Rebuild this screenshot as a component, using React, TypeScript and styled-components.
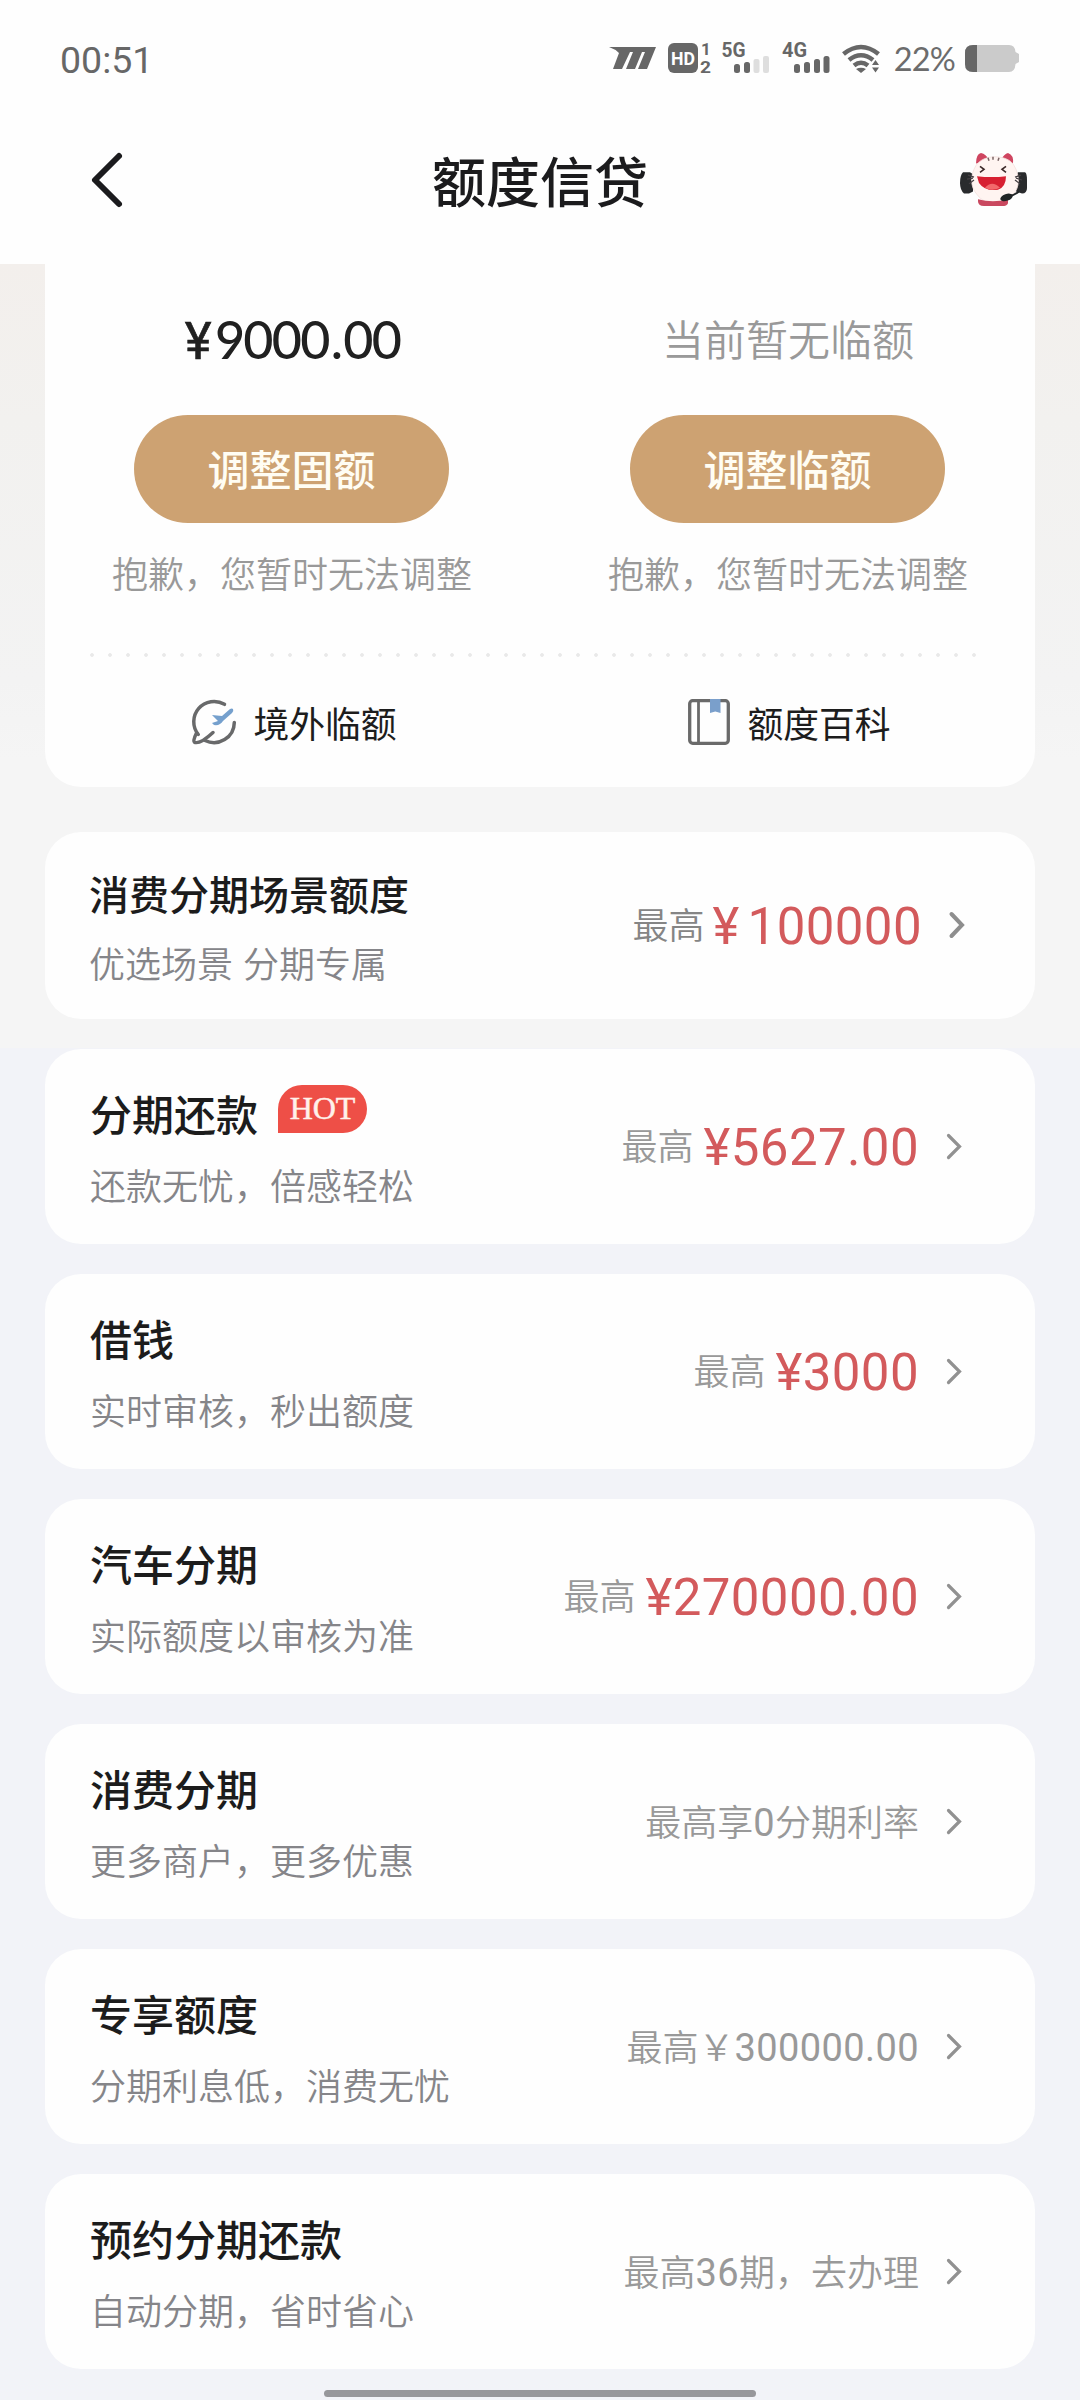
import React from 'react';
import styled, { createGlobalStyle, css } from 'styled-components';

const cjk = `'Noto Sans CJK SC', sans-serif`;
const digits = `Roboto, 'Noto Sans CJK SC', sans-serif`;

const GlobalStyle = createGlobalStyle`
  * { box-sizing: border-box; }
  body { margin: 0; background: #f2f3f8; font-family: ${cjk}; }
  svg { display: block; flex: none; overflow: visible; }
`;

const Screen = styled.div`
  width: 1080px;
  height: 2400px;
  overflow: hidden;
  display: flex;
  flex-direction: column;
  background: linear-gradient(#f3efec 264px, #f2f1ef 420px, #f3f3f3 680px, #f5f5f5 760px, #f5f5f5 1048px, #f2f3f8 1048px);
`;

const Header = styled.header`
  flex: none;
  height: 264px;
  background: #fefefe;
`;

const StatusBar = styled.div`
  height: 118px;
  padding: 0 61px 0 60px;
  display: flex;
  align-items: center;
  justify-content: space-between;
`;

const Clock = styled.div`
  font: 400 37.5px/44px ${digits};
  color: #676767;
  padding-top: 2px;
`;

const StatusIcons = styled.div`
  display: flex;
  align-items: center;
`;

const Battery = styled.div`
  font: 400 32.5px/44px Lato, sans-serif;
  letter-spacing: -0.8px;
  color: #6c6c6c;
  margin: 0 10px 0 14px;
`;

const NavBar = styled.div`
  height: 128px;
  padding: 0 50px 4px 80px;
  display: grid;
  grid-template-columns: 100px 1fr 130px;
  align-items: center;
`;

const PageTitle = styled.h1`
  margin: 0;
  font: 500 54px/64px ${cjk};
  color: #1b1b1d;
  text-align: center;
`;

const Mascot = styled.div`
  display: flex;
  justify-content: flex-end;
`;

const Content = styled.main`
  flex: none;
  padding: 0 45px;
  display: flex;
  flex-direction: column;
`;

const Panel = styled.section`
  height: 523px;
  margin-bottom: 45px;
  padding: 0 45px;
  background: #fefefe;
  border-radius: 0 0 36px 36px;
`;

const Columns = styled.div`
  display: grid;
  grid-template-columns: 1fr 1fr;
  margin: 0 -45px;
`;

const Quota = styled.div`
  height: 389px;
  padding-top: 43px;
  display: flex;
  flex-direction: column;
  align-items: center;

  &:first-child {
    padding-right: 2px;
  }
`;

const Balance = styled.div<{ $empty?: boolean }>`
  height: 66px;
  ${(p) => p.$empty
    ? css`font: 350 42px/62px ${cjk}; color: #999; padding-left: 1px;`
    : css`font: 500 52px/64px Lato, sans-serif; color: #202020; letter-spacing: -1.7px; padding-left: 2px;`}
`;

const YenMark = styled.span`
  font: 400 51px/64px ${digits};
  -webkit-text-stroke: 0.6px #202020;
  margin-right: 5px;
`;

const Point = styled.span`
  margin: 0 2px;
`;

const PillButton = styled.button`
  width: 315px;
  height: 108px;
  margin-top: 42px;
  padding: 0 0 2px;
  border: 0;
  border-radius: 54px;
  background: #cda272;
  color: #fffdf3;
  font: 500 42px/106px ${cjk};
`;

const Notice = styled.div`
  margin-top: 24px;
  padding-left: 1px;
  font: 350 36px/50px ${cjk};
  color: #999;
`;

const DotRule = styled.div`
  height: 4px;
  background: radial-gradient(circle, #e9e9e9 1.5px, transparent 2.2px) -7px 0 / 18px 4px repeat-x;
`;

const Shortcut = styled.div`
  height: 130px;
  padding: 0 0 1px 4px;
  display: flex;
  align-items: center;
  justify-content: center;
  gap: 17px;
  font: 400 35.8px/50px ${cjk};
  color: #1d1d1d;
`;

const CardRow = styled.article<{ $compact?: boolean }>`
  height: ${(p) => (p.$compact ? 187 : 195)}px;
  margin-bottom: 30px;
  padding: ${(p) => (p.$compact ? '0 69px 0 44px' : '0 71px 0 45px')};
  background: #fefefe;
  border-radius: 36px;
  display: flex;
  align-items: center;
`;

const Info = styled.div`
  flex: 1;
  display: flex;
  flex-direction: column;
  padding-bottom: 2px;
`;

const TitleLine = styled.div<{ $compact?: boolean }>`
  height: 60px;
  display: flex;
  align-items: flex-start;
  font: 500 ${(p) => (p.$compact ? 40 : 42)}px/60px ${cjk};
  color: #1c1c1c;
`;

const HotBadge = styled.span`
  width: 89px;
  height: 48px;
  margin: 2px 0 0 20px;
  border-radius: 24px 24px 24px 0;
  background: #ee4f47;
  color: #fff1ea;
  font: 400 32px/47px 'Liberation Serif', serif;
  -webkit-text-stroke: 0.5px #fff1ea;
  text-align: center;
`;

const Subtitle = styled.div<{ $compact?: boolean }>`
  margin-top: ${(p) => (p.$compact ? 14 : 16)}px;
  font: 350 36px/50px ${cjk};
  word-spacing: 2px;
  color: #858589;
`;

const Value = styled.div<{ $compact?: boolean }>`
  display: flex;
  align-items: center;
  margin-right: ${(p) => (p.$compact ? 26 : 27)}px;
`;

const Prefix = styled.span<{ $dark?: boolean }>`
  font: 350 36px/50px ${cjk};
  color: ${(p) => (p.$dark ? '#858585' : '#999')};
  margin: 0 ${(p) => (p.$dark ? 8 : 10)}px 5px 0;
`;

const Amount = styled.span`
  font: 400 51px/60px ${digits};
  letter-spacing: 0.4px;
  padding-top: 3px;
  color: #d35a5c;
`;

const WideYen = styled.span`
  margin-right: 8px;
`;

const Remark = styled.span`
  display: flex;
  align-items: baseline;
  margin-bottom: 1px;
  font: 350 36px/50px ${cjk};
  color: #999;
`;

const Figures = styled.span`
  font: 400 38px/50px ${digits};
  letter-spacing: 0.4px;
`;

const HomeBar = styled.div`
  flex: none;
  align-self: center;
  width: 432px;
  height: 7px;
  margin-top: -9px;
  border-radius: 4px;
  background: #97979b;
`;

const SignalIcons = () => (
  <svg width="271" height="36" viewBox="0 0 271 36" fill="#676767">
    <path d="M0 6 L47 6 L38 28 H29 L36 11 H33 L26 28 H17 L24 11 H21 L13 28 H4 L10 12 Q6 8 0 6Z" />
    <rect x="59" y="2" width="30" height="30" rx="6" />
    <g fontFamily="Roboto, sans-serif" fontWeight="700">
      <text x="62" y="23.5" fontSize="18" fill="#fff" textLength="24" lengthAdjust="spacingAndGlyphs">HD</text>
      <text x="92" y="14" fontSize="17">1</text>
      <text x="91" y="32" fontSize="17" textLength="11" lengthAdjust="spacingAndGlyphs">2</text>
      <text x="112.5" y="16" fontSize="20" textLength="24" lengthAdjust="spacingAndGlyphs">5G</text>
      <text x="173" y="16" fontSize="20" textLength="25" lengthAdjust="spacingAndGlyphs">4G</text>
    </g>
    <rect x="125" y="23" width="6" height="9" rx="2.5" />
    <rect x="135" y="21" width="6" height="11" rx="2.5" />
    <g fill="#dedede">
      <rect x="144.5" y="18" width="6" height="14" rx="2" />
      <rect x="154" y="15" width="6" height="17" rx="2" />
    </g>
    <rect x="185" y="23" width="6" height="9" rx="2.5" />
    <rect x="195" y="21" width="6" height="11" rx="2.5" />
    <rect x="205" y="18" width="6" height="14" rx="2.5" />
    <rect x="214.5" y="15" width="6" height="17" rx="2.5" />
    <g fill="none" stroke="#676767" strokeWidth="4.6">
      <path d="M234.500 13 Q252 -1 269.500 13" />
      <path d="M240 19 Q252 9.500 264 19" />
      <path d="M245 24.500 Q252 19 259 24.500" />
    </g>
    <path d="M247 28 Q252 25.500 257 28 L252 32Z M263 24 l3.500-5 3.500 5z M263 26.500 l3.500 5 3.500-5z" />
  </svg>
);

const BatteryIcon = () => (
  <svg width="54" height="28" viewBox="0 0 54 28">
    <path d="M8 0 H44 Q50 0 50.500 7 L54 9 V17 L50.500 19 Q50 27 44 27 H8 Q0 27 0 19 V8 Q0 0 8 0Z" fill="#cbcbcb" />
    <path d="M12 0 H8 Q0 0 0 8 V19 Q0 27 8 27 H12Z" fill="#676767" />
  </svg>
);

const BackIcon = () => (
  <svg width="54" height="60" viewBox="0 0 54 60" fill="none" stroke="#1b1b1d" strokeWidth="6" strokeLinecap="round" strokeLinejoin="round">
    <path d="M39 6 L15 30 L39 54" />
  </svg>
);

const CatIcon = () => (
  <svg width="70" height="58" viewBox="0 0 70 60" preserveAspectRatio="none">
    <path d="M3 22 H10 L13 24 V42 L9 44 H4 Q0 40 0 33 Q0 25 3 22Z" fill="#292b2d" />
    <path d="M58 22 H65 Q67 23 67 30 V38 Q67 44 62 44 L56 42 V24Z" fill="#292b2d" />
    <path d="M16 13 Q16 3 21 2 Q26 3 29 9 L21 12Z M41 9 Q44 3 48 2 Q54 4 53 13Z" fill="#cf4560" />
    <path d="M35 6 C43 6 51 9 54 15 C60 25 60 38 53 45 Q46 54 35 54 Q23 54 17 45 C10 37 10 25 16 15 C20 9 27 6 35 6Z" fill="#fff4f1" stroke="#f2dfdc" strokeWidth="0.8" />
    <path d="M28 7 l1 3 M33 6 v3 M39 7 l-1 3" stroke="#7b6565" strokeWidth="1.5" />
    <path d="M20 16 l4 3 -4 3 M46 16 l-4 3 4 3" fill="none" stroke="#3b2828" strokeWidth="1.6" />
    <path d="M17 26 Q32 28 46 26 Q46 37 38 40 Q25 42 19 33Z" fill="#d71f31" />
    <path d="M25 38 Q32 30 40 38 Q32 42 25 38Z" fill="#f2696c" />
    <path d="M8 25 l6 2 M7 29 l6 -1 M9 34 l5 -4 M61 25 l-6 2 M62 30 l-6 -2 M60 34 l-5 -4" stroke="#464044" strokeWidth="1.3" />
    <path d="M18 50 Q33 54 48 50 V54 Q47 57 42 57 H24 Q18 57 18 52Z" fill="#c9485f" />
    <path d="M59 42 Q54 46 46 48" fill="none" stroke="#202425" strokeWidth="2" />
    <ellipse cx="46.5" cy="48" rx="6.5" ry="3.5" transform="rotate(-20 46.5 48)" fill="#202425" />
  </svg>
);

const PlaneIcon = () => (
  <svg width="44" height="44" viewBox="0 0 44 44" fill="none" strokeLinecap="round">
    <path d="M32.500 4.300 A20.300 20.300 0 0 0 6.300 34.500 M42.300 22.500 A20.300 20.300 0 0 1 13 40.500" stroke="#68696a" strokeWidth="3.5" />
    <path d="M4.500 33 Q0.500 41 2.500 42.300 Q8 44.500 21 32.500" stroke="#68696a" strokeWidth="3.5" />
    <path d="M41 9 Q42 11 40 13 L31 21 Q28 26 22 25 L20 23 L26 21 L20 15 L30 16 L38 9 Q40 8 41 9Z" fill="#75a0cd" />
  </svg>
);

const BookIcon = () => (
  <svg width="42" height="46" viewBox="0 0 42 46">
    <rect x="1.7" y="1.7" width="38.6" height="42.6" rx="3" fill="none" stroke="#6a6a6a" strokeWidth="3.3" />
    <path d="M10.500 2 V44" stroke="#6a6a6a" strokeWidth="2.8" />
    <path d="M22 0 H32.500 V14 L27.300 12.500 L22 14Z" fill="#7a9fcb" />
  </svg>
);

const Chevron = ({ bold }: { bold?: boolean }) => (
  <svg width="18" height="30" viewBox="0 0 18 30" fill="none" stroke={bold ? '#8e8e8e' : '#919191'} strokeWidth={bold ? 4 : 3.2} strokeLinecap="round">
    <path d={bold ? 'M3.500 3 L14 14 L3.500 25' : 'M2.500 3.500 L13.500 14.500 L2.500 25.500'} />
  </svg>
);

type Item = {
  title: string;
  note: string;
  amount?: string;
  remark?: string;
  hot?: boolean;
  compact?: boolean;
};

const items: Item[] = [
  { title: '消费分期场景额度', note: '优选场景 分期专属', amount: '100000', compact: true },
  { title: '分期还款', note: '还款无忧，倍感轻松', amount: '5627.00', hot: true },
  { title: '借钱', note: '实时审核，秒出额度', amount: '3000' },
  { title: '汽车分期', note: '实际额度以审核为准', amount: '270000.00' },
  { title: '消费分期', note: '更多商户，更多优惠', remark: '最高享0分期利率' },
  { title: '专享额度', note: '分期利息低，消费无忧', remark: '最高￥300000.00' },
  { title: '预约分期还款', note: '自动分期，省时省心', remark: '最高36期，去办理' },
];

const RemarkText = ({ text }: { text: string }) => (
  <Remark>
    {text.split(/([\d.]+)/).map((part, i) =>
      i % 2 ? <Figures key={i}>{part}</Figures> : <span key={i}>{part}</span>,
    )}
  </Remark>
);

const ProductCard = ({ title, note, amount, remark, hot, compact }: Item) => (
  <CardRow $compact={compact}>
    <Info>
      <TitleLine $compact={compact}>
        {title}
        {hot && <HotBadge>HOT</HotBadge>}
      </TitleLine>
      <Subtitle $compact={compact}>{note}</Subtitle>
    </Info>
    <Value $compact={compact}>
      {amount && (
        <>
          <Prefix $dark={compact}>最高</Prefix>
          <Amount>{compact ? <WideYen>¥</WideYen> : '¥'}{amount}</Amount>
        </>
      )}
      {remark && <RemarkText text={remark} />}
    </Value>
    <Chevron bold={compact} />
  </CardRow>
);

export default function App() {
  return (
    <Screen>
      <GlobalStyle />
      <Header>
        <StatusBar>
          <Clock>00:51</Clock>
          <StatusIcons>
            <SignalIcons />
            <Battery>22%</Battery>
            <BatteryIcon />
          </StatusIcons>
        </StatusBar>
        <NavBar>
          <BackIcon />
          <PageTitle>额度信贷</PageTitle>
          <Mascot><CatIcon /></Mascot>
        </NavBar>
      </Header>
      <Content>
        <Panel>
          <Columns>
            <Quota>
              <Balance><YenMark>¥</YenMark>9000<Point>.</Point>00</Balance>
              <PillButton>调整固额</PillButton>
              <Notice>抱歉，您暂时无法调整</Notice>
            </Quota>
            <Quota>
              <Balance $empty>当前暂无临额</Balance>
              <PillButton>调整临额</PillButton>
              <Notice>抱歉，您暂时无法调整</Notice>
            </Quota>
          </Columns>
          <DotRule />
          <Columns>
            <Shortcut><PlaneIcon />境外临额</Shortcut>
            <Shortcut><BookIcon />额度百科</Shortcut>
          </Columns>
        </Panel>
        {items.map((item) => <ProductCard key={item.title} {...item} />)}
      </Content>
      <HomeBar />
    </Screen>
  );
}
